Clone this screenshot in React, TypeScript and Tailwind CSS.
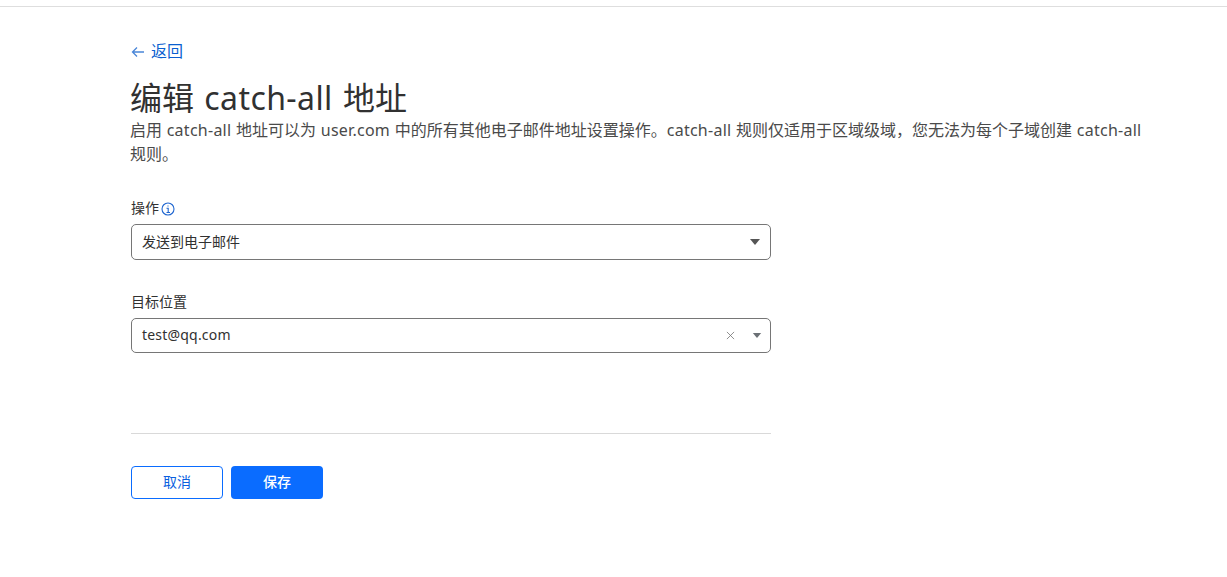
import React from "react";

function Caret({ className }: { className: string }) {
  return (
    <svg viewBox="0 0 10 6" className={className} aria-hidden="true">
      <path d="M0 0h10L5 6z" fill="currentColor" />
    </svg>
  );
}

function Lat({ children, className }: { children: React.ReactNode; className: string }) {
  return <span className={className}>{children}</span>;
}

export default function App() {
  const d = "tracking-[0.26px]";
  return (
    <div className="h-[577px] w-[1227px] overflow-hidden bg-white font-['Noto_Sans','Noto_Sans_CJK_SC',sans-serif] text-[#313131]">
      <div className="h-[7px] border-b border-[#dedede]" />
      <main className="pl-[131px] pr-[85px]">
        <a className="mt-[34px] flex h-5 items-center gap-[6px] text-[16px] leading-5 text-[#0a5fd0]">
          <svg viewBox="0 0 14 12" className="mt-px h-[12px] w-[14px]" fill="none" stroke="#4a86d8" strokeWidth="1.3" aria-hidden="true">
            <path d="M13 6H1.500M6 1.500 1.500 6 6 10.500" />
          </svg>
          <span>返回</span>
        </a>
        <h1 className="ml-[-1px] mt-[17px] text-[32px] font-normal leading-[40px] [word-spacing:2px]">
          编辑 <Lat className="tracking-[0.4px]">catch-all</Lat> 地址
        </h1>
        <p className="ml-[-1px] mt-0 w-[1014px] text-[16px] leading-[24px] text-[#4a4a4a] [word-spacing:0.5px]">
          启用 <Lat className={d}>catch-all</Lat> 地址可以为 <Lat className={d}>user.com</Lat> 中的所有其他电子邮件地址设置操作。<Lat className={d}>catch-all</Lat> 规则仅适用于区域级域，您无法为每个子域创建 <Lat className={d}>catch-all</Lat> 规则。
        </p>

        <section className="mt-[32px] w-[640px]">
          <div className="flex h-5 items-center gap-[2px] text-[14px] leading-5">
            <span>操作</span>
            <svg viewBox="0 0 14 14" className="mt-px h-[14px] w-[14px]" fill="none" stroke="#1f66d0" strokeWidth="1.1" aria-hidden="true">
              <circle cx="7" cy="7" r="6" />
              <path d="M5.500 6.200H7.200V10.500M5.500 10.500H9M7 3.400V4.600" />
            </svg>
          </div>
          <div className="mt-[6px] flex h-9 items-center rounded-[5px] border border-[#767676] pb-px pl-[10px] pr-[10px] text-[14px]">
            <span className="flex-1">发送到电子邮件</span>
            <Caret className="mt-px h-[6px] w-[10px] text-[#555555]" />
          </div>

          <div className="mt-[32px] h-5 text-[14px] leading-5">目标位置</div>
          <div className="mt-[6px] flex h-[35px] items-center rounded-[5px] border border-[#767676] pb-[2px] pl-[10px] pr-[8px] text-[14px]">
            <span className="flex-1 tracking-[0.2px]">test@qq.com</span>
            <svg viewBox="0 0 10 10" className="mr-[17px] mt-[2px] h-[9px] w-[9px]" fill="none" stroke="#767676" strokeWidth="0.9" aria-hidden="true">
              <path d="M1 1l8 8M9 1l-8 8" />
            </svg>
            <Caret className="mt-[2px] h-[5px] w-[10px] text-[#6b7075]" />
          </div>

          <div className="mt-[80px] border-t border-[#d9d9d9]" />

          <div className="mt-[32px] flex gap-2">
            <button className="h-[33px] w-[92px] rounded-[4px] border border-[#0a6cff] bg-white pb-[2px] text-[14px] text-[#0a5fe0]">取消</button>
            <button className="h-[33px] w-[92px] rounded-[4px] bg-[#0a6cff] pb-[2px] text-[14px] font-medium text-white">保存</button>
          </div>
        </section>
      </main>
    </div>
  );
}
